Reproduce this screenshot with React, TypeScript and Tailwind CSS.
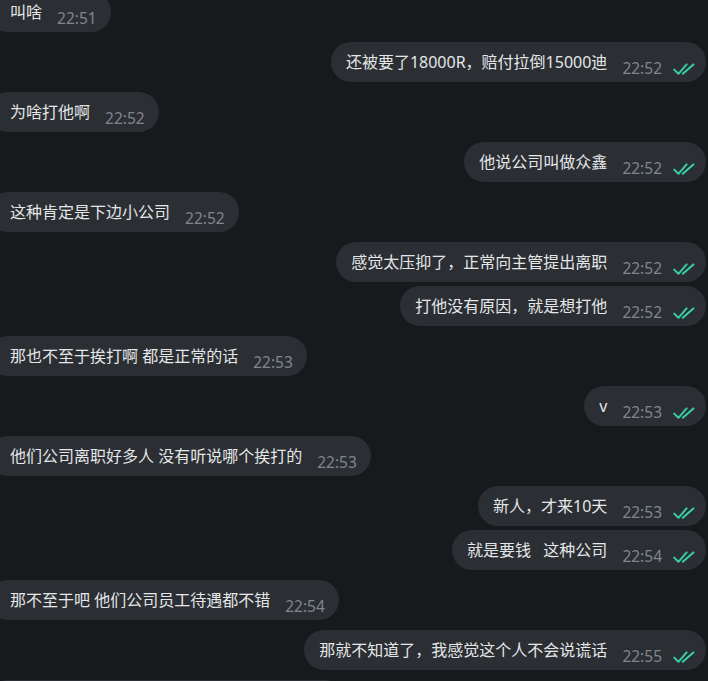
import React from 'react';

type Msg = { text: string; time: string; out?: boolean };

const MESSAGES: Msg[] = [
  { text: '叫啥', time: '22:51' },
  { text: '还被要了18000R，赔付拉倒15000迪', time: '22:52', out: true },
  { text: '为啥打他啊', time: '22:52' },
  { text: '他说公司叫做众鑫', time: '22:52', out: true },
  { text: '这种肯定是下边小公司', time: '22:52' },
  { text: '感觉太压抑了，正常向主管提出离职', time: '22:52', out: true },
  { text: '打他没有原因，就是想打他', time: '22:52', out: true },
  { text: '那也不至于挨打啊 都是正常的话', time: '22:53' },
  { text: 'v', time: '22:53', out: true },
  { text: '他们公司离职好多人 没有听说哪个挨打的', time: '22:53' },
  { text: '新人，才来10天', time: '22:53', out: true },
  { text: '就是要钱\u00a0\u00a0\u00a0这种公司', time: '22:54', out: true },
  { text: '那不至于吧 他们公司员工待遇都不错', time: '22:54' },
  { text: '那就不知道了，我感觉这个人不会说谎话', time: '22:55', out: true },
];

function DoubleCheck() {
  return (
    <svg width="22" height="12" viewBox="0 0 22 12" fill="none" className="block shrink-0">
      <path d="M1.2 6.6 L5.4 10.8 L13.6 1.4" stroke="#38cfa2" strokeWidth="2" strokeLinecap="round" strokeLinejoin="round" />
      <path d="M9.8 10.8 L20.4 1.4" stroke="#38cfa2" strokeWidth="2" strokeLinecap="round" strokeLinejoin="round" />
    </svg>
  );
}

function Bubble({ msg }: { msg: Msg }) {
  if (msg.out) {
    return (
      <div className="flex justify-end pr-[2px]">
        <div className="flex h-[40px] items-center rounded-[20px] bg-[#2b2e33] pl-[15px] pr-[11px]">
          <span className="whitespace-pre text-[16px] leading-[20px] text-[#e4e6e8]">{msg.text}</span>
          <span className="ml-[15px] mr-[11px] self-end pb-[4px] text-[15.5px] leading-[20px] text-[#80868e]">
            {msg.time}
          </span>
          <span className="self-end pb-[7px]">
            <DoubleCheck />
          </span>
        </div>
      </div>
    );
  }
  return (
    <div className="flex justify-start">
      <div className="-ml-[12px] flex h-[40px] items-center rounded-[20px] bg-[#2b2e33] pl-[22px] pr-[14px]">
        <span className="whitespace-pre text-[16px] leading-[20px] text-[#e4e6e8]">{msg.text}</span>
        <span className="ml-[15px] self-end pb-[4px] text-[15.5px] leading-[20px] text-[#80868e]">{msg.time}</span>
      </div>
    </div>
  );
}

export default function App() {
  return (
    <div
      className="h-[681px] w-[708px] overflow-hidden bg-[#18191d]"
      style={{ fontFamily: '"Noto Sans", "Noto Sans CJK SC", sans-serif' }}
    >
      <div className="-mt-[8px] flex flex-col">
        {MESSAGES.map((m, i) => {
          const prev = MESSAGES[i - 1];
          const mt = i === 0 ? '' : prev.out === m.out ? 'mt-[4px]' : 'mt-[10px]';
          return (
            <div key={i} className={mt}>
              <Bubble msg={m} />
            </div>
          );
        })}
        {/* next message, only its top edge is in view */}
        <div className="mt-[10px] flex justify-start">
          <div className="-ml-[12px] h-[40px] w-[357px] rounded-[20px] bg-[#2b2e33]" />
        </div>
      </div>
    </div>
  );
}
